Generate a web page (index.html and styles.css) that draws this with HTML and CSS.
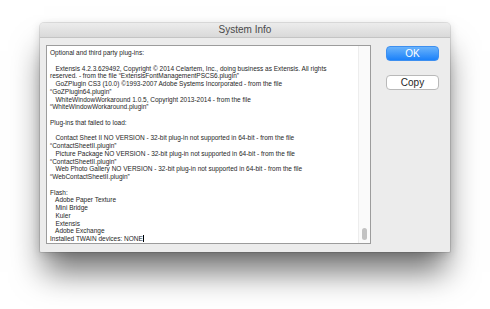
FILE: index.html
```html
<!DOCTYPE html>
<html lang="en">
<head>
    <meta charset="UTF-8">
    <meta name="viewport" content="width=device-width, initial-scale=1.0">
    <title>System Info</title>
    <link rel="stylesheet" href="styles.css">
</head>
<body>

<div class="dialog">
    <div class="titlebar">System Info</div>
    <div class="dialog-body">
        <div class="info-box">
<pre class="info-text">Optional and third party plug-ins:

   Extensis 4.2.3.629492, Copyright © 2014 Celartem, Inc., doing business as Extensis. All rights
reserved. - from the file “ExtensisFontManagementPSCS6.plugin”
   GoZPlugin CS3 (10.0) ©1993-2007 Adobe Systems Incorporated - from the file
“GoZPlugin64.plugin”
   WhiteWindowWorkaround 1.0.5, Copyright 2013-2014 - from the file
“WhiteWindowWorkaround.plugin”

Plug-ins that failed to load:

   Contact Sheet II NO VERSION - 32-bit plug-in not supported in 64-bit - from the file
“ContactSheetII.plugin”
   Picture Package NO VERSION - 32-bit plug-in not supported in 64-bit - from the file
“ContactSheetII.plugin”
   Web Photo Gallery NO VERSION - 32-bit plug-in not supported in 64-bit - from the file
“WebContactSheetII.plugin”

Flash:
   Adobe Paper Texture
   Mini Bridge
   Kuler
   Extensis
   Adobe Exchange
Installed TWAIN devices: NONE<span class="caret"></span></pre>
            <div class="scroll-track">
                <div class="scroll-thumb"></div>
            </div>
        </div>
        <div class="buttons">
            <button class="btn btn-ok">OK</button>
            <button class="btn btn-copy">Copy</button>
        </div>
    </div>
</div>

</body>
</html>
```
FILE: styles.css
```css
html {
    background: #ffffff;
}

body {
    margin: 0;
    min-height: 309px;
    box-sizing: border-box;
    padding: 23px 40px 0;
    background: #ffffff;
    font-family: 'Liberation Sans', Arial, sans-serif;
}

.dialog {
    width: 410px;
    height: 229px;
    background: #ececec;
    border-radius: 4px 4px 1px 1px;
    box-shadow: 0 0 0 1px rgba(0, 0, 0, 0.1),
                0 2px 10px rgba(0, 0, 0, 0.15),
                0 24px 30px -4px rgba(0, 0, 0, 0.55);
    display: flex;
    flex-direction: column;
}

.titlebar {
    height: 14px;
    line-height: 14px;
    text-align: center;
    font-size: 10px;
    color: #4a4a4a;
    background: linear-gradient(#ececec, #d9d9d9);
    border-bottom: 1px solid #c4c4c4;
    border-radius: 4px 4px 0 0;
}

.dialog-body {
    display: flex;
    padding: 7px 11px 8px 6px;
}

.info-box {
    width: 323px;
    height: 197px;
    background: #ffffff;
    border: 1px solid #9c9c9c;
    display: flex;
}

.info-text {
    flex: 1;
    margin: 0;
    padding: 3px 0 0 3px;
    font-family: 'Liberation Sans', Arial, sans-serif;
    font-size: 6.5px;
    line-height: 7.75px;
    color: #1e1e1e;
    white-space: pre;
    overflow: hidden;
}

.caret {
    display: inline-block;
    width: 1px;
    height: 7px;
    background: #000;
    vertical-align: -1px;
}

.scroll-track {
    width: 11px;
    background: #fafafa;
    border-left: 1px solid #ededed;
    display: flex;
    flex-direction: column;
    justify-content: flex-end;
    align-items: center;
    padding-bottom: 3px;
}

.scroll-thumb {
    width: 5px;
    height: 12px;
    background: #c2c2c2;
    border-radius: 3px;
}

.buttons {
    margin-left: 15px;
    padding-top: 1px;
    display: flex;
    flex-direction: column;
    gap: 14px;
}

.btn {
    width: 53px;
    height: 15px;
    padding: 0;
    border-radius: 4px;
    font-family: 'Liberation Sans', Arial, sans-serif;
    font-size: 10px;
    line-height: 13px;
}

.btn-ok {
    background: linear-gradient(#6ab3fb, #1b81fa);
    border: 1px solid #3d8ff0;
    color: #ffffff;
}

.btn-copy {
    background: #ffffff;
    border: 1px solid #b9b9b9;
    color: #1e1e1e;
}
```
